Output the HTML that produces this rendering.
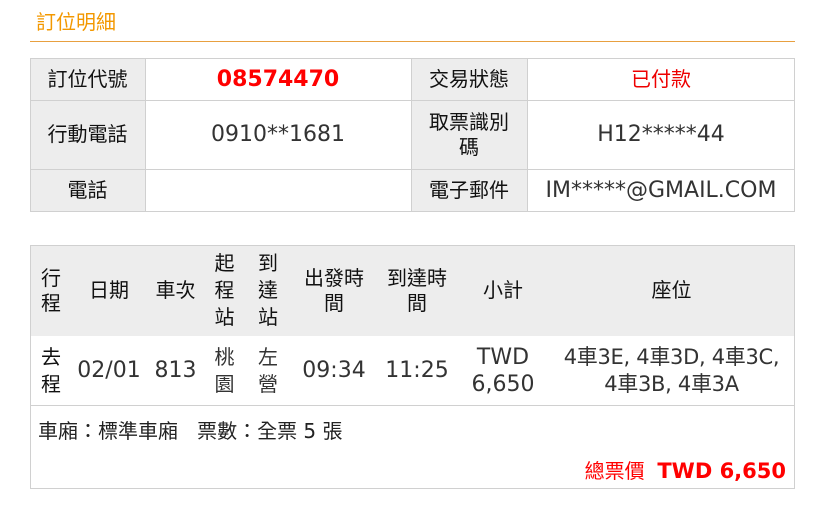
<!DOCTYPE html>
<html><head><meta charset="utf-8"><style>
body{margin:0;width:821px;height:513px;background:#fff;position:relative;font-family:"DejaVu Sans","Noto Sans CJK TC",sans-serif;color:#333;overflow:hidden}
.a{position:absolute;box-sizing:border-box;display:flex;align-items:center;justify-content:center;text-align:center;font-size:20px;line-height:25px}
.g{background:#ededed;color:#111}
.k{color:#111}
.n{font-size:22px}
.line{position:absolute;background:#d0d0d0}
</style></head><body>
<div style="position:absolute;left:36px;top:6px;font-size:20px;color:#f39800;font-family:'Noto Sans CJK TC',sans-serif">訂位明細</div>
<div style="position:absolute;left:30px;top:41px;width:765px;height:1px;background:#e8a040"></div>

<!-- table 1 -->
<div class="a g" style="left:30px;top:58px;width:115px;height:153px"></div>
<div class="a g" style="left:411px;top:58px;width:116px;height:153px"></div>
<div class="a k" style="left:30px;top:58px;width:115px;height:42px">訂位代號</div>
<div class="a" style="left:145px;top:58px;width:266px;height:42px;color:#f00;font-weight:bold;font-size:22px">08574470</div>
<div class="a k" style="left:411px;top:58px;width:116px;height:42px">交易狀態</div>
<div class="a" style="left:527px;top:58px;width:268px;height:42px;color:#e00">已付款</div>
<div class="a k" style="left:30px;top:100px;width:115px;height:69px">行動電話</div>
<div class="a n" style="left:145px;top:100px;width:266px;height:69px">0910**1681</div>
<div class="a k" style="left:411px;top:100px;width:116px;height:69px;padding:0 16px">取票識別碼</div>
<div class="a n" style="left:527px;top:100px;width:268px;height:69px">H12*****44</div>
<div class="a k" style="left:30px;top:169px;width:115px;height:42px">電話</div>
<div class="a k" style="left:411px;top:169px;width:116px;height:42px">電子郵件</div>
<div class="a n" style="left:527px;top:169px;width:268px;height:42px">IM*****@GMAIL.COM</div>
<div class="line" style="left:30px;top:58px;width:765px;height:1px"></div>
<div class="line" style="left:30px;top:100px;width:765px;height:1px"></div>
<div class="line" style="left:30px;top:169px;width:765px;height:1px"></div>
<div class="line" style="left:30px;top:211px;width:765px;height:1px"></div>
<div class="line" style="left:30px;top:58px;width:1px;height:154px"></div>
<div class="line" style="left:145px;top:58px;width:1px;height:154px"></div>
<div class="line" style="left:411px;top:58px;width:1px;height:154px"></div>
<div class="line" style="left:527px;top:58px;width:1px;height:154px"></div>
<div class="line" style="left:794px;top:58px;width:1px;height:154px"></div>

<!-- table 2 -->
<div class="a g" style="left:30px;top:245px;width:765px;height:91px"></div>
<div class="a k" style="left:30px;top:245px;width:42px;height:91px;padding:0 10px">行程</div>
<div class="a k" style="left:72px;top:245px;width:74px;height:91px">日期</div>
<div class="a k" style="left:146px;top:245px;width:59px;height:91px">車次</div>
<div class="a k" style="left:205px;top:245px;width:39px;height:91px;padding:0 9px;line-height:27px">起程站</div>
<div class="a k" style="left:244px;top:245px;width:48px;height:91px;padding:0 14px;line-height:27px">到達站</div>
<div class="a k" style="left:292px;top:245px;width:84px;height:91px;padding:0 12px">出發時間</div>
<div class="a k" style="left:376px;top:245px;width:82px;height:91px;padding:0 10px">到達時間</div>
<div class="a k" style="left:458px;top:245px;width:90px;height:91px">小計</div>
<div class="a k" style="left:548px;top:245px;width:247px;height:91px">座位</div>

<div class="a k" style="left:30px;top:336px;width:42px;height:69px;padding:0 10px;line-height:27px">去程</div>
<div class="a n" style="left:72px;top:336px;width:74px;height:69px">02/01</div>
<div class="a n" style="left:146px;top:336px;width:59px;height:69px">813</div>
<div class="a" style="left:205px;top:336px;width:39px;height:69px;padding:0 9px;line-height:27px">桃園</div>
<div class="a" style="left:244px;top:336px;width:48px;height:69px;padding:0 14px;line-height:27px">左營</div>
<div class="a n" style="left:292px;top:336px;width:84px;height:69px">09:34</div>
<div class="a n" style="left:376px;top:336px;width:82px;height:69px">11:25</div>
<div class="a n" style="left:458px;top:336px;width:90px;height:69px;padding:0 12px;line-height:27px">TWD 6,650</div>
<div class="a" style="left:548px;top:336px;width:247px;height:69px;line-height:27px;font-size:21px;letter-spacing:-0.3px">4車3E, 4車3D, 4車3C,<br>4車3B, 4車3A</div>

<div style="position:absolute;left:38px;top:415px;font-size:20px;color:#222;white-space:pre">車廂：標準車廂   票數：全票 5 張</div>
<div style="position:absolute;right:35px;top:455px;font-size:20px;color:#f00;white-space:nowrap;text-align:right"><span>總票價</span>&nbsp;&nbsp;<b style="font-size:21px">TWD 6,650</b></div>

<div class="line" style="left:30px;top:245px;width:765px;height:1px"></div>
<div class="line" style="left:30px;top:405px;width:765px;height:1px"></div>
<div class="line" style="left:30px;top:488px;width:765px;height:1px"></div>
<div class="line" style="left:30px;top:245px;width:1px;height:244px"></div>
<div class="line" style="left:794px;top:245px;width:1px;height:244px"></div>
</body></html>
